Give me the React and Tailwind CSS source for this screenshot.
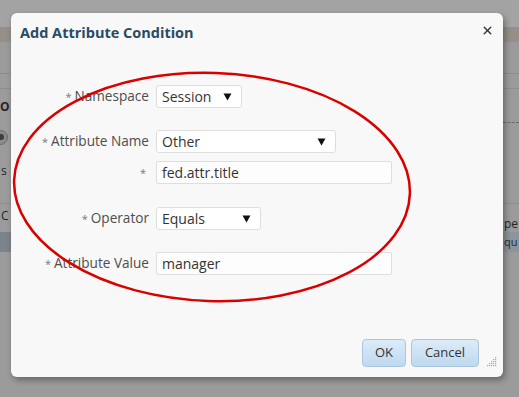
import { X } from "lucide-react";

const Arrow = () => (
  <svg width="9" height="8" viewBox="0 0 9 8" className="shrink-0">
    <path d="M0.5 0.5 H8.5 L4.5 7.5 Z" fill="#111" />
  </svg>
);

const Label = ({ text }) => (
  <div className="w-[145px] shrink-0 pr-[7px] text-right text-[13.6px] text-[#4d4d4d] whitespace-nowrap">
    <span className="text-[11px] text-[#777] mr-[3px]">*</span>
    {text}
  </div>
);

const Select = ({ value, width }) => (
  <div
    className="h-[23px] flex items-center justify-between pl-[5px] pr-[9px] bg-white border border-[#dedede] rounded-[3px] text-[14px] text-[#333]"
    style={{ width }}
  >
    <span>{value}</span>
    <Arrow />
  </div>
);

const Input = ({ value }) => (
  <div className="h-[23px] w-[236px] flex items-center pl-[5px] bg-[#fdfdfd] border border-[#dedede] rounded-[2px] text-[14px] text-[#333]">
    {value}
  </div>
);

const Grip = () => (
  <svg width="11" height="11" viewBox="0 0 11 11">
    {[
      [9, 1], [7, 3], [9, 3], [5, 5], [7, 5], [9, 5], [3, 7], [5, 7], [7, 7], [9, 7],
      [1, 9], [3, 9], [5, 9], [7, 9], [9, 9],
    ].map(([x, y]) => (
      <rect key={`${x}-${y}`} x={x} y={y} width="1.2" height="1.2" fill="#a8a8a8" />
    ))}
  </svg>
);

const App = () => {
  return (
    <div className="relative w-[519px] h-[397px] overflow-hidden bg-[#9b9b9b] font-['Open_Sans',sans-serif]">
      {/* page behind the dialog, dimmed */}
      <div className="flex flex-col text-[13px] text-[#262626]">
        <div className="h-[27px] bg-[#a3a3a3]" />
        <div className="h-[15px] bg-[#958f88]" />
        <div className="h-[32px] border-b border-[#8c8c8c]" />
        <div className="h-[15px] border-b border-[#8e8e8e]" />
        <div className="h-[35px] flex justify-between">
          <span className="mt-[11px] font-bold leading-[14px] text-[12px]">O</span>
          <div className="self-end mb-[1px] w-[16px] border-b border-dashed border-[#6a6a6a]" />
        </div>
        <div className="h-[26px] flex items-center">
          <div className="-ml-[7px] w-[15px] h-[15px] rounded-full bg-[#8a8a8a] border border-[#6d6d6d] flex items-center justify-center">
            <div className="w-[6px] h-[6px] rounded-full bg-[#3d3d3d]" />
          </div>
        </div>
        <div className="h-[54px] border-b border-[#8e8e8e]">
          <span className="block mt-[14px] ml-[1px] leading-[14px] text-[12px]">s</span>
        </div>
        <div className="h-[28px] flex justify-between items-start">
          <span className="mt-[5px] ml-[1px] leading-[14px] text-[12px]">C</span>
          <span className="mt-[14px] mr-[1px] leading-[12px] text-[12px]">pe</span>
        </div>
        <div className="h-[20px] flex justify-between">
          <div className="w-[11px] bg-[#7b838b]" />
          <div className="w-[16px] pl-[1px] bg-[#8c959d] text-[11px] text-[#1f2b36] leading-[20px]">qu</div>
        </div>
      </div>

      {/* dialog */}
      <div className="absolute left-[11px] top-[13px] w-[492px] h-[364px] flex flex-col bg-[#f8f8f8] rounded-[6px] shadow-[2px_3px_6px_rgba(0,0,0,0.35)]">
        <div className="h-[40px] flex items-center justify-between pl-[9px] pr-[9px]">
          <h1 className="text-[14.5px] font-bold text-[#2b4b62]">Add Attribute Condition</h1>
          <X size={13} strokeWidth={2.6} className="text-[#333] -mt-[6px]" />
        </div>

        <div className="flex flex-col">
          <div className="mt-[32px] flex items-center">
            <Label text="Namespace" />
            <Select value="Session" width={86} />
          </div>
          <div className="mt-[22px] flex items-center">
            <Label text="Attribute Name" />
            <Select value="Other" width={180} />
          </div>
          <div className="mt-[8px] flex items-center">
            <Label text="" />
            <Input value="fed.attr.title" />
          </div>
          <div className="mt-[23px] flex items-center">
            <Label text="Operator" />
            <Select value="Equals" width={105} />
          </div>
          <div className="mt-[22px] flex items-center">
            <Label text="Attribute Value" />
            <Input value="manager" />
          </div>
        </div>

        <div className="flex-1" />

        <div className="flex justify-end gap-[5px] pr-[24px] pb-[10px]">
          <button className="h-[28px] w-[44px] rounded-[4px] border border-[#a8c6e0] bg-gradient-to-b from-[#dcebf8] to-[#bfd9ef] text-[13px] text-[#333]">
            OK
          </button>
          <button className="h-[28px] w-[68px] rounded-[4px] border border-[#a8c6e0] bg-gradient-to-b from-[#dcebf8] to-[#bfd9ef] text-[13px] text-[#333]">
            Cancel
          </button>
        </div>

        <div className="absolute right-[6px] bottom-[10px]">
          <Grip />
        </div>
      </div>

      {/* red hand-drawn annotation */}
      <svg className="absolute left-0 top-0 pointer-events-none" width="519" height="397" viewBox="0 0 519 397">
        <ellipse
          cx="212"
          cy="187"
          rx="198"
          ry="114"
          fill="none"
          stroke="#d90000"
          strokeWidth="2.5"
          transform="rotate(2 212 187)"
        />
      </svg>
    </div>
  );
};

export default App;
